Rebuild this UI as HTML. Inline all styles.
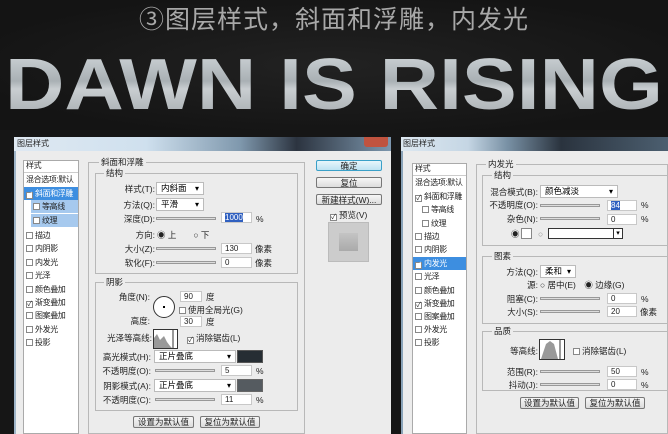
<!DOCTYPE html>
<html><head><meta charset="utf-8"><style>
*{margin:0;padding:0;box-sizing:border-box}
body{width:668px;height:434px;overflow:hidden;background:#161616;font-family:"Liberation Sans","Noto Sans CJK SC",sans-serif;position:relative}
.a{position:absolute}
.t{position:absolute;font-size:8.5px;color:#222;white-space:nowrap;line-height:10px}
.r{text-align:right}
.box{position:absolute;border:1px solid #b8b8b8}
.lg{position:absolute;font-size:8.5px;background:#ececec;padding:0 2px;color:#222;line-height:10px}
.in{position:absolute;background:#fff;border:1px solid #c8c8c8;height:11px;font-size:8px;padding-left:3px;line-height:9px;color:#222}
.sl{position:absolute;height:3px;border:1px solid #999;background:#ddd}
.cb{display:inline-block;width:7px;height:7px;border:1px solid #888;background:#fff;margin-right:2px;vertical-align:-1px;font-size:7px;line-height:6px;text-align:center}
.btn{position:absolute;border:1px solid #777;background:linear-gradient(#f6f6f6,#dcdcdc);font-size:8.5px;text-align:center;line-height:10px;color:#222;border-radius:2px;white-space:nowrap;overflow:hidden}
.sel{position:absolute;background:#fff;border:1px solid #bbb;height:13px;font-size:8.5px;padding-left:4px;line-height:11px}
.sel:after{content:"▾";position:absolute;right:4px;top:0;font-size:8px}
.li{position:absolute;font-size:8px;letter-spacing:-0.4px;line-height:13px;height:13px;padding-left:2px;color:#222;width:100%;white-space:nowrap;overflow:hidden}
</style></head><body>
<div class="a" style="left:0;top:0;width:668px;height:130px;background:radial-gradient(ellipse at 50% 50%,#222 0%,#141414 80%)"></div>
<div class="a" style="left:0;top:4px;width:668px;text-align:center;font-size:25px;color:#a8a8a8;line-height:32px;letter-spacing:1px">③图层样式，斜面和浮雕，内发光</div>
<svg class="a" style="left:0;top:50px" width="668" height="66">
<defs><linearGradient id="g" x1="0" y1="0" x2="0" y2="1"><stop offset="0" stop-color="#d8dde0"/><stop offset=".45" stop-color="#a9b0b4"/><stop offset=".55" stop-color="#c9ced1"/><stop offset="1" stop-color="#9ea4a8"/></linearGradient></defs>
<text x="5" y="59" font-family="Liberation Sans" font-weight="bold" font-size="72" fill="url(#g)" textLength="658" lengthAdjust="spacingAndGlyphs">DAWN IS RISING</text>
</svg>

<!-- dialog 1 -->
<div class="a" style="left:14px;top:137px;width:377px;height:14px;background:linear-gradient(90deg,#dfe9f2,#cfe0ee 35%,#7f98ad 60%,#2c3440 75%,#7d97ae)"></div>
<div class="t" style="left:17px;top:139px;font-size:8px">图层样式</div>
<div class="a" style="left:364px;top:137px;width:24px;height:10px;background:#c0533f;border-radius:0 0 3px 3px"></div>
<div class="a" style="left:14px;top:151px;width:377px;height:283px;background:#ececec;border-left:2px solid #9fb5c8"></div>
<div class="a" style="left:23px;top:160px;width:56px;height:274px;background:#fff;border:1px solid #aaa"></div>
<div class="li" style="left:24px;top:159px;width:54px">样式</div>
<div class="li" style="left:24px;top:172px;width:54px;border-top:1px solid #ccc">混合选项:默认</div>
<div class="li" style="left:24px;top:187px;width:54px;background:#3d8ee0;color:#fff"><span class="cb">✓</span>斜面和浮雕</div>
<div class="li" style="left:31px;top:200px;width:47px;background:#a6c9ee"><span class="cb"></span>等高线</div>
<div class="li" style="left:31px;top:214px;width:47px;background:#a6c9ee"><span class="cb"></span>纹理</div>
<div class="li" style="left:24px;top:229px;width:54px"><span class="cb"></span>描边</div>
<div class="li" style="left:24px;top:242px;width:54px"><span class="cb"></span>内阴影</div>
<div class="li" style="left:24px;top:256px;width:54px"><span class="cb"></span>内发光</div>
<div class="li" style="left:24px;top:269px;width:54px"><span class="cb"></span>光泽</div>
<div class="li" style="left:24px;top:283px;width:54px"><span class="cb"></span>颜色叠加</div>
<div class="li" style="left:24px;top:296px;width:54px"><span class="cb">✓</span>渐变叠加</div>
<div class="li" style="left:24px;top:309px;width:54px"><span class="cb"></span>图案叠加</div>
<div class="li" style="left:24px;top:323px;width:54px"><span class="cb"></span>外发光</div>
<div class="li" style="left:24px;top:336px;width:54px"><span class="cb"></span>投影</div>

<div class="box" style="left:88px;top:162px;width:217px;height:272px"></div>
<div class="lg" style="left:99px;top:157px">斜面和浮雕</div>
<div class="box" style="left:95px;top:173px;width:203px;height:101px"></div>
<div class="lg" style="left:104px;top:168px">结构</div>
<div class="t r" style="left:100px;top:184px;width:55px">样式(T):</div><div class="sel" style="left:156px;top:182px;width:48px">内斜面</div>
<div class="t r" style="left:100px;top:200px;width:55px">方法(Q):</div><div class="sel" style="left:156px;top:198px;width:48px">平滑</div>
<div class="t r" style="left:100px;top:214px;width:55px">深度(D):</div><div class="sl" style="left:156px;top:217px;width:60px"></div><div class="in" style="left:221px;top:212px;width:31px"><span style="background:#3060c0;color:#fff">1000</span></div><div class="t" style="left:256px;top:214px">%</div>
<div class="t r" style="left:100px;top:230px;width:55px">方向:</div><div class="t" style="left:157px;top:230px">◉ 上　　○ 下</div>
<div class="t r" style="left:100px;top:244px;width:55px">大小(Z):</div><div class="sl" style="left:156px;top:247px;width:60px"></div><div class="in" style="left:221px;top:243px;width:31px">130</div><div class="t" style="left:255px;top:244px">像素</div>
<div class="t r" style="left:100px;top:258px;width:55px">软化(F):</div><div class="sl" style="left:156px;top:261px;width:60px"></div><div class="in" style="left:221px;top:257px;width:31px">0</div><div class="t" style="left:255px;top:258px">像素</div>
<div class="box" style="left:95px;top:282px;width:203px;height:129px"></div>
<div class="lg" style="left:104px;top:277px">阴影</div>
<div class="t r" style="left:100px;top:292px;width:50px">角度(N):</div>
<div class="a" style="left:153px;top:296px;width:22px;height:22px;border:1px solid #333;border-radius:50%;background:#fff"><div class="a" style="left:9px;top:9px;width:2px;height:2px;background:#000"></div></div>
<div class="in" style="left:180px;top:291px;width:22px">90</div><div class="t" style="left:206px;top:292px">度</div>
<div class="t" style="left:179px;top:305px"><span class="cb"></span>使用全局光(G)</div>
<div class="t r" style="left:100px;top:316px;width:50px">高度:</div>
<div class="in" style="left:180px;top:316px;width:22px">30</div><div class="t" style="left:206px;top:317px">度</div>
<div class="t r" style="left:100px;top:333px;width:52px">光泽等高线:</div>
<div class="a" style="left:153px;top:329px;width:25px;height:20px;border:1px solid #333;background:#fff"><svg width="24" height="18"><path d="M0 18 L0 8 L3 4 L6 10 L10 6 L13 12 L16 16 L18 18Z" fill="#999"/><line x1="19" y1="0" x2="19" y2="18" stroke="#333"/></svg></div>
<div class="t" style="left:187px;top:333px"><span class="cb">✓</span>消除锯齿(L)</div>
<div class="t r" style="left:95px;top:352px;width:56px">高光模式(H):</div><div class="sel" style="left:154px;top:350px;width:82px">正片叠底</div><div class="a" style="left:237px;top:350px;width:26px;height:13px;background:#262d33;border:1px solid #555"></div>
<div class="t r" style="left:95px;top:366px;width:56px">不透明度(O):</div><div class="sl" style="left:155px;top:369px;width:60px"></div><div class="in" style="left:221px;top:365px;width:31px">5</div><div class="t" style="left:256px;top:366px">%</div>
<div class="t r" style="left:95px;top:381px;width:56px">阴影模式(A):</div><div class="sel" style="left:154px;top:379px;width:82px">正片叠底</div><div class="a" style="left:237px;top:379px;width:26px;height:13px;background:#555b60;border:1px solid #666"></div>
<div class="t r" style="left:95px;top:395px;width:56px">不透明度(C):</div><div class="sl" style="left:155px;top:398px;width:60px"></div><div class="in" style="left:221px;top:394px;width:31px">11</div><div class="t" style="left:256px;top:395px">%</div>
<div class="btn" style="left:133px;top:416px;width:61px;height:12px">设置为默认值</div>
<div class="btn" style="left:200px;top:416px;width:60px;height:12px">复位为默认值</div>
<div class="btn" style="left:316px;top:160px;width:66px;height:11px;border-color:#3aa0c8;background:linear-gradient(#e8f6fc,#bfe3f2)">确定</div>
<div class="btn" style="left:316px;top:177px;width:66px;height:11px">复位</div>
<div class="btn" style="left:316px;top:194px;width:66px;height:11px">新建样式(W)...</div>
<div class="t" style="left:330px;top:210px"><span class="cb">✓</span>预览(V)</div>
<div class="a" style="left:328px;top:222px;width:41px;height:40px;background:#ccc;border:1px solid #bbb"><div class="a" style="left:10px;top:10px;width:19px;height:18px;background:linear-gradient(#c4c4c4,#aaa)"></div></div>

<!-- dialog 2 -->
<div class="a" style="left:401px;top:137px;width:267px;height:14px;background:linear-gradient(90deg,#dde8f1,#c5d6e4 25%,#7890a4 40%,#2a333e 60%,#4c5f70)"></div>
<div class="t" style="left:403px;top:139px;font-size:8px">图层样式</div>
<div class="a" style="left:401px;top:151px;width:267px;height:283px;background:#ececec;border-left:2px solid #8aa3b8"></div>
<div class="a" style="left:412px;top:163px;width:55px;height:271px;background:#fff;border:1px solid #aaa"></div>
<div class="li" style="left:413px;top:162px;width:53px">样式</div>
<div class="li" style="left:413px;top:175px;width:53px;border-top:1px solid #ccc">混合选项:默认</div>
<div class="li" style="left:413px;top:190px;width:53px"><span class="cb">✓</span>斜面和浮雕</div>
<div class="li" style="left:420px;top:203px;width:46px"><span class="cb"></span>等高线</div>
<div class="li" style="left:420px;top:217px;width:46px"><span class="cb"></span>纹理</div>
<div class="li" style="left:413px;top:230px;width:53px"><span class="cb"></span>描边</div>
<div class="li" style="left:413px;top:243px;width:53px"><span class="cb"></span>内阴影</div>
<div class="li" style="left:413px;top:257px;width:53px;background:#3d8ee0;color:#fff"><span class="cb">✓</span>内发光</div>
<div class="li" style="left:413px;top:270px;width:53px"><span class="cb"></span>光泽</div>
<div class="li" style="left:413px;top:284px;width:53px"><span class="cb"></span>颜色叠加</div>
<div class="li" style="left:413px;top:297px;width:53px"><span class="cb">✓</span>渐变叠加</div>
<div class="li" style="left:413px;top:310px;width:53px"><span class="cb"></span>图案叠加</div>
<div class="li" style="left:413px;top:323px;width:53px"><span class="cb"></span>外发光</div>
<div class="li" style="left:413px;top:336px;width:53px"><span class="cb"></span>投影</div>

<div class="box" style="left:476px;top:164px;width:192px;height:270px"></div>
<div class="lg" style="left:486px;top:159px">内发光</div>
<div class="box" style="left:482px;top:175px;width:186px;height:71px"></div>
<div class="lg" style="left:492px;top:170px">结构</div>
<div class="t r" style="left:480px;top:187px;width:58px">混合模式(B):</div><div class="sel" style="left:540px;top:185px;width:78px">颜色减淡</div>
<div class="t r" style="left:480px;top:200px;width:58px">不透明度(O):</div><div class="sl" style="left:540px;top:204px;width:60px"></div><div class="in" style="left:607px;top:200px;width:30px"><span style="background:#3060c0;color:#fff">84</span></div><div class="t" style="left:641px;top:200px">%</div>
<div class="t r" style="left:480px;top:214px;width:58px">杂色(N):</div><div class="sl" style="left:540px;top:217px;width:60px"></div><div class="in" style="left:607px;top:214px;width:30px">0</div><div class="t" style="left:641px;top:214px">%</div>
<div class="t" style="left:511px;top:229px">◉</div><div class="a" style="left:521px;top:228px;width:11px;height:11px;background:#fff;border:1px solid #888"></div>
<div class="t" style="left:538px;top:229px;color:#888">○</div><div class="a" style="left:548px;top:228px;width:75px;height:11px;background:#fff;border:1px solid #333"><div class="a" style="right:0;top:0;width:9px;height:9px;border-left:1px solid #333;font-size:7px;line-height:9px;text-align:center">▾</div></div>
<div class="box" style="left:482px;top:256px;width:186px;height:68px"></div>
<div class="lg" style="left:492px;top:251px">图素</div>
<div class="t r" style="left:480px;top:267px;width:58px">方法(Q):</div><div class="sel" style="left:540px;top:265px;width:36px">柔和</div>
<div class="t r" style="left:480px;top:280px;width:58px">源:</div><div class="t" style="left:540px;top:280px">○ 居中(E)　◉ 边缘(G)</div>
<div class="t r" style="left:480px;top:294px;width:58px">阻塞(C):</div><div class="sl" style="left:540px;top:297px;width:60px"></div><div class="in" style="left:607px;top:293px;width:30px">0</div><div class="t" style="left:641px;top:294px">%</div>
<div class="t r" style="left:480px;top:307px;width:58px">大小(S):</div><div class="sl" style="left:540px;top:310px;width:60px"></div><div class="in" style="left:607px;top:306px;width:30px">20</div><div class="t" style="left:640px;top:307px">像素</div>
<div class="box" style="left:482px;top:331px;width:186px;height:60px"></div>
<div class="lg" style="left:492px;top:326px">品质</div>
<div class="t r" style="left:480px;top:346px;width:58px">等高线:</div>
<div class="a" style="left:539px;top:339px;width:26px;height:21px;border:1px solid #333;background:#fff"><svg width="25" height="19"><path d="M1 19 L6 4 L10 1 L14 4 L18 19Z" fill="#999"/><line x1="20" y1="0" x2="20" y2="19" stroke="#333"/></svg></div>
<div class="t" style="left:573px;top:346px"><span class="cb"></span>消除锯齿(L)</div>
<div class="t r" style="left:480px;top:367px;width:58px">范围(R):</div><div class="sl" style="left:540px;top:370px;width:60px"></div><div class="in" style="left:607px;top:366px;width:30px">50</div><div class="t" style="left:641px;top:367px">%</div>
<div class="t r" style="left:480px;top:380px;width:58px">抖动(J):</div><div class="sl" style="left:540px;top:383px;width:60px"></div><div class="in" style="left:607px;top:379px;width:30px">0</div><div class="t" style="left:641px;top:380px">%</div>
<div class="btn" style="left:520px;top:397px;width:59px;height:12px">设置为默认值</div>
<div class="btn" style="left:585px;top:397px;width:60px;height:12px">复位为默认值</div>
</body></html>
